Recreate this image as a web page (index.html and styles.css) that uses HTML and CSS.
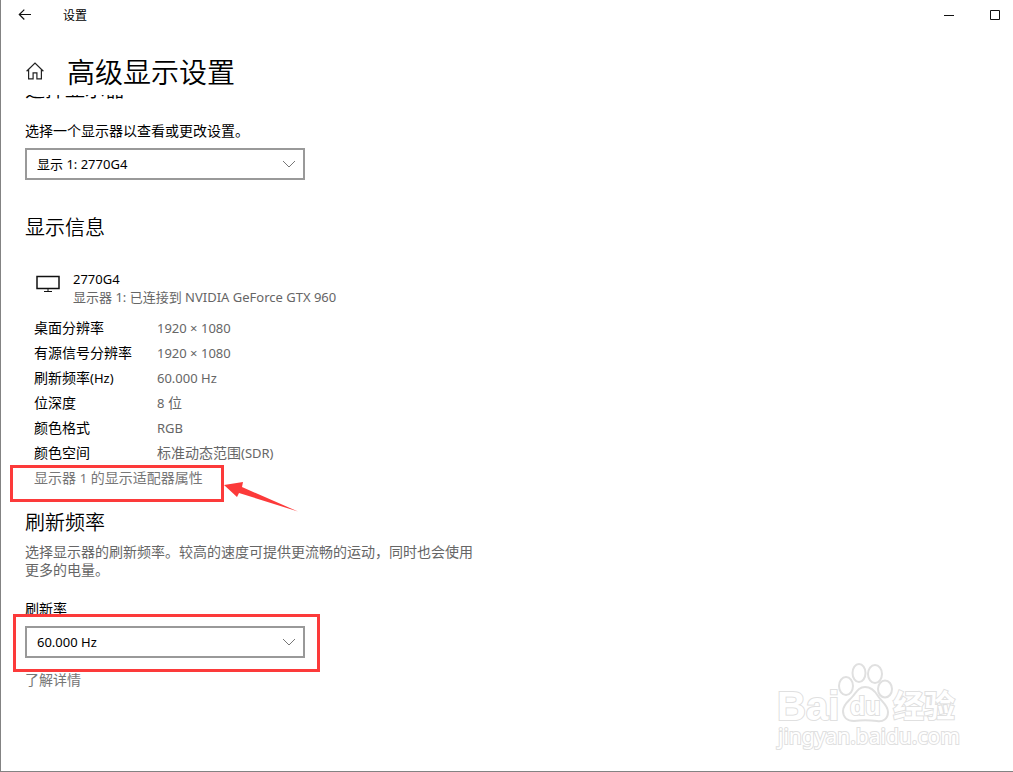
FILE: index.html
```html
<!DOCTYPE html>
<html lang="zh-CN">
<head>
<meta charset="utf-8">
<meta name="viewport" content="width=device-width, initial-scale=1">
<title>设置</title>
<link rel="stylesheet" href="styles.css">
</head>
<body>
<div class="window">
  <header class="titlebar">
    <button class="titlebar-btn back" aria-label="返回">
      <svg width="14" height="12" viewBox="0 0 14 12" fill="none" stroke="#111" stroke-width="1.2"><path d="M13 5.5H1.2M6.3.6 1.3 5.5l5 5"/></svg>
    </button>
    <span class="titlebar-name">设置</span>
    <button class="titlebar-btn" aria-label="最小化">
      <svg width="10" height="10" viewBox="0 0 10 10"><path d="M0 5.5h10" stroke="#111"/></svg>
    </button>
    <button class="titlebar-btn" aria-label="最大化">
      <svg width="10" height="10" viewBox="0 0 10 10"><path d="M.5.5h9v9h-9z" fill="none" stroke="#111"/></svg>
    </button>
  </header>

  <div class="page-head">
    <button class="home" aria-label="主页">
      <svg width="18" height="18" viewBox="0 0 18 18" fill="none" stroke="#222" stroke-width="1.2"><path d="M.6 9.3 9 1l8.400 8.300M2.600 7.500v9.400h4.500v-6h3.800v6h4.500V7.500"/></svg>
    </button>
    <h1 class="page-title">高级显示设置</h1>
  </div>

  <main class="content">
    <h2 class="section-title scrolled">选择显示器</h2>
    <label class="label" for="display">选择一个显示器以查看或更改设置。</label>
    <div class="combo">
      <select id="display" class="combo-select"><option>显示 1: 2770G4</option></select>
      <svg class="combo-arrow" width="14" height="8" viewBox="0 0 14 8" fill="none" stroke="#777"><path d="m1 1 6 6 6-6"/></svg>
    </div>

    <h2 class="section-title info-title">显示信息</h2>
    <div class="device">
      <svg width="24" height="18" viewBox="0 0 24 18" fill="none" stroke="#111"><path d="M1 1.500h22v12H1z" stroke-width="1.500"/><path d="M12 14v2M8 16.500h8"/></svg>
      <div class="device-text">
        <div class="device-name">2770G4</div>
        <div class="muted">显示器 1: 已连接到 NVIDIA GeForce GTX 960</div>
      </div>
    </div>
    <table class="specs">
      <tr><th scope="row">桌面分辨率</th><td><span class="latin">1920 × 1080</span></td></tr>
      <tr><th scope="row">有源信号分辨率</th><td><span class="latin">1920 × 1080</span></td></tr>
      <tr><th scope="row">刷新频率<span class="latin">(Hz)</span></th><td><span class="latin">60.000 Hz</span></td></tr>
      <tr><th scope="row">位深度</th><td><span class="latin">8</span> 位</td></tr>
      <tr><th scope="row">颜色格式</th><td><span class="latin">RGB</span></td></tr>
      <tr><th scope="row">颜色空间</th><td>标准动态范围<span class="latin">(SDR)</span></td></tr>
    </table>
    <div class="adapter">
      <a class="link" href="#adapter">显示器 <span class="latin">1</span> 的显示适配器属性</a>
      <span class="mark mark-adapter"></span>
      <svg class="mark-arrow" width="76" height="32" viewBox="0 0 76 32"><path d="M0 4 19 1l-1 5L74 30.500 15 12l-2 4z" fill="#fc3a3a"/></svg>
    </div>

    <h2 class="section-title rate-title">刷新频率</h2>
    <p class="description">选择显示器的刷新频率。较高的速度可提供更流畅的运动，同时也会使用更多的电量。</p>
    <label class="label" for="rate">刷新率</label>
    <div class="combo">
      <select id="rate" class="combo-select"><option>60.000 Hz</option></select>
      <svg class="combo-arrow" width="14" height="8" viewBox="0 0 14 8" fill="none" stroke="#777"><path d="m1 1 6 6 6-6"/></svg>
      <span class="mark mark-rate"></span>
    </div>
    <a class="link more" href="#more">了解详情</a>
  </main>

  <svg class="watermark" width="195" height="92" viewBox="0 0 195 92" role="img" aria-label="Baidu 经验">
    <g class="wm-shape">
      <ellipse cx="76" cy="26" rx="7" ry="9"/>
      <ellipse cx="89" cy="13" rx="6.500" ry="9"/>
      <ellipse cx="105" cy="14" rx="7" ry="9"/>
      <ellipse cx="115" cy="29" rx="7" ry="8.500"/>
      <path d="M95 27c6 0 10 4 13 9s10 9 10 16-5 10-11 9c-8-1-16-1-23 0-7 0-11-4-11-10 0-7 6-10 10-15s6-9 12-9z"/>
    </g>
    <text class="wm-text wm-logo" x="7" y="60">Bai</text>
    <text class="wm-text wm-du" x="80" y="55">du</text>
    <text class="wm-text wm-cn" x="123" y="57">经验</text>
    <text class="wm-text wm-url" x="8" y="84">jingyan.baidu.com</text>
  </svg>
</div>
</body>
</html>
```
FILE: styles.css
```css
* {
  box-sizing: border-box;
}

body {
  margin: 0;
  background: #fff;
  color: #000;
  font: 14px/18px "Noto Sans", "Noto Sans CJK SC", sans-serif;
}

button {
  padding: 0;
  border: 0;
  background: none;
}

svg {
  display: block;
  flex: none;
}

.window {
  position: relative;
  display: flex;
  flex-direction: column;
  min-height: 100vh;
  border-left: 1px solid #838383;
  border-bottom: 1px solid #838383;
}

.titlebar {
  display: flex;
  gap: 10px;
  height: 30px;
}

.titlebar-btn {
  display: flex;
  align-items: center;
  justify-content: center;
  width: 36px;
}

.back {
  width: 48px;
}

.titlebar-name {
  flex: 1;
  padding-left: 4px;
  font-size: 12px;
  line-height: 32px;
}

.page-head {
  display: flex;
  align-items: center;
  gap: 23px;
  height: 65px;
  padding: 16px 25px 0;
}

.home {
  width: 18px;
}

.page-title {
  margin: 0;
  font-family: "Noto Sans CJK SC", sans-serif;
  font-size: 28px;
  font-weight: 350;
  line-height: 36px;
}

.content {
  display: flex;
  flex-direction: column;
  align-items: flex-start;
  overflow: hidden;
  padding: 0 24px 24px;
}

.section-title {
  margin: 0;
  font-family: "Noto Sans CJK SC", sans-serif;
  font-size: 20px;
  font-weight: 350;
  line-height: 28px;
}

.scrolled {
  margin: -20px 0 19px;
}

.info-title {
  margin: 33px 0 29px;
}

.rate-title {
  margin: 17px 0 7px;
}

.combo {
  position: relative;
  width: 280px;
  max-width: 100%;
  margin-top: 8px;
}

.combo-select {
  display: block;
  width: 100%;
  height: 32px;
  padding: 0 32px 0 10px;
  border: 2px solid #999;
  border-radius: 0;
  appearance: none;
  background: #fff;
  color: #000;
  font: inherit;
  font-size: 13px;
}

.combo-arrow {
  position: absolute;
  top: 12px;
  right: 9px;
  pointer-events: none;
}

.device {
  display: flex;
  align-items: center;
  gap: 13px;
  margin-bottom: 9px;
  padding-left: 11px;
  font-size: 13px;
}

.device svg {
  margin-bottom: 8px;
}

.muted {
  color: #666;
}

.specs {
  margin-left: 9px;
  border-collapse: collapse;
}

.specs th,
.specs td {
  height: 25px;
  padding: 0;
  font-weight: 400;
  text-align: left;
}

.specs th {
  min-width: 123px;
  padding-right: 24px;
}

.specs td {
  color: #666;
}

.latin {
  font-size: 13px;
}

.adapter {
  position: relative;
  padding-left: 9px;
  line-height: 25px;
}

.link {
  color: #767676;
  text-decoration: none;
}

.mark {
  position: absolute;
  border: 3px solid #fc3a3a;
  pointer-events: none;
}

.mark-adapter {
  top: 0;
  left: -15px;
  width: 214px;
  height: 37px;
}

.mark-arrow {
  position: absolute;
  top: 16px;
  left: 199px;
}

.mark-rate {
  inset: -12px -15px -14px -12px;
}

.description {
  max-width: 455px;
  margin: 0 0 21px;
  color: #666;
}

.more {
  margin-top: 13px;
}

.watermark {
  position: absolute;
  right: 48px;
  bottom: 19px;
  pointer-events: none;
}

.wm-shape,
.wm-text {
  fill: #fff;
  stroke: #e0e0e0;
  stroke-width: 2px;
}

.wm-text {
  paint-order: stroke;
  font-family: "Liberation Sans", "Noto Sans CJK SC", sans-serif;
}

.wm-logo {
  font-size: 40px;
  font-weight: 700;
}

.wm-du {
  font-size: 25px;
  font-weight: 700;
}

.wm-cn {
  font-size: 31px;
  font-weight: 700;
}

.wm-url {
  font-family: "Noto Sans", sans-serif;
  font-size: 21px;
}
```
